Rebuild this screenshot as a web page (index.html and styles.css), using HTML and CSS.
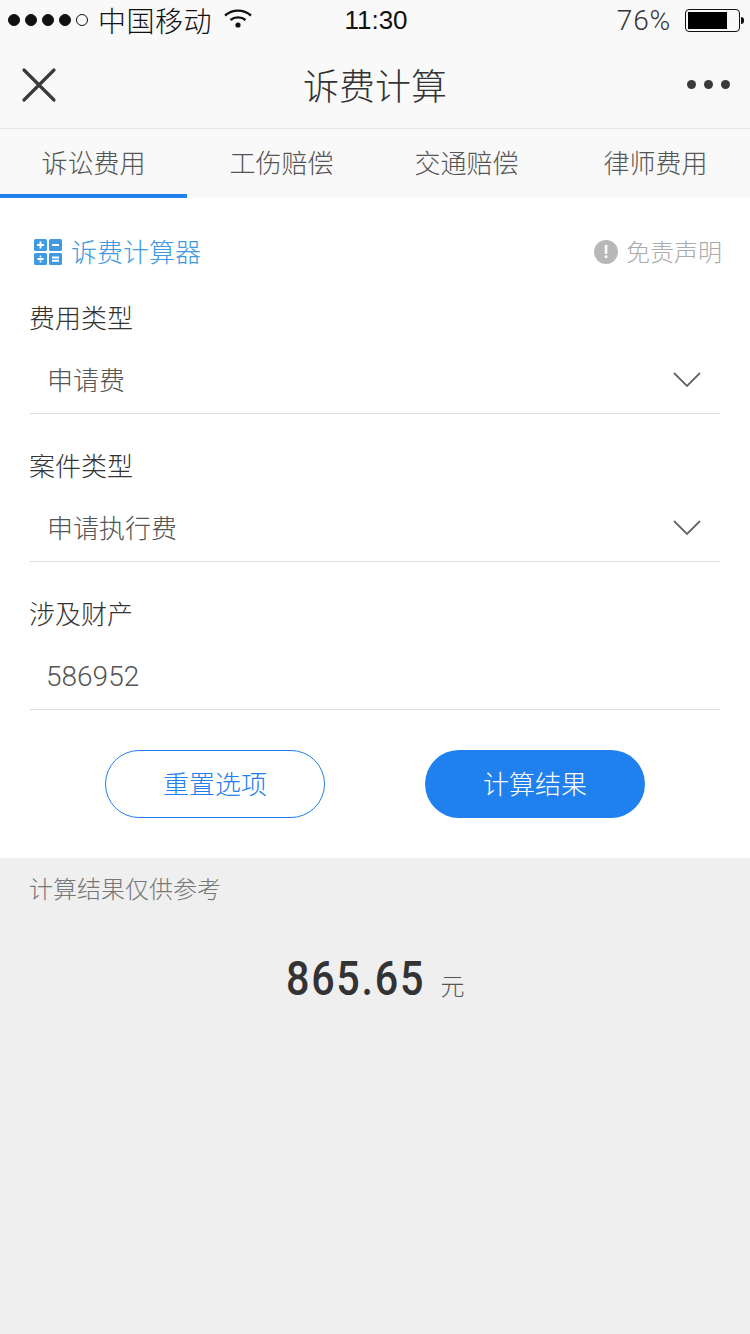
FILE: index.html
```html
<!DOCTYPE html>
<html lang="zh-CN">
<head>
  <meta charset="UTF-8">
  <meta name="viewport" content="width=device-width, initial-scale=1.0">
  <title>诉费计算</title>
  <link rel="stylesheet" href="styles.css">
</head>
<body>
  <!-- 状态栏 -->
  <div class="status-bar">
    <div class="status-left">
      <div class="signal">
        <span class="dot"></span><span class="dot"></span><span class="dot"></span><span class="dot"></span><span class="dot empty"></span>
      </div>
      <span class="carrier">中国移动</span>
      <svg class="wifi" width="30" height="20" viewBox="0 0 30 20">
        <path d="M2 7.5C9.500 1 20.500 1 28 7.500" fill="none" stroke="#111" stroke-width="2.400"/>
        <path d="M7.500 12C11.500 8.500 18.500 8.500 22.500 12" fill="none" stroke="#111" stroke-width="2.400"/>
        <circle cx="15" cy="17" r="2.600" fill="#111"/>
      </svg>
    </div>
    <span class="time">11:30</span>
    <div class="status-right">
      <span class="percent">76%</span>
      <div class="battery"><div class="battery-fill"></div></div>
      <div class="battery-nub"></div>
    </div>
  </div>

  <!-- 导航栏 -->
  <div class="nav-bar">
    <svg class="close-icon" width="36" height="36" viewBox="0 0 36 36">
      <path d="M3 3L33 33M33 3L3 33" fill="none" stroke="#3a3a3a" stroke-width="3.200" stroke-linecap="round"/>
    </svg>
    <h1 class="nav-title">诉费计算</h1>
    <div class="more"><span></span><span></span><span></span></div>
  </div>

  <!-- 标签 -->
  <div class="tabs">
    <div class="tab active">诉讼费用</div>
    <div class="tab">工伤赔偿</div>
    <div class="tab">交通赔偿</div>
    <div class="tab">律师费用</div>
  </div>

  <div class="card">
    <div class="card-head">
      <div class="card-title">
        <svg width="28" height="28" viewBox="0 0 28 28">
          <rect x="0" y="1" width="13" height="12" rx="1.500" fill="#3f9ae2"/>
          <rect x="15" y="1" width="13" height="12" rx="1.500" fill="#3f9ae2"/>
          <rect x="0" y="15" width="13" height="12" rx="1.500" fill="#3f9ae2"/>
          <rect x="15" y="15" width="13" height="12" rx="1.500" fill="#3f9ae2"/>
          <path d="M3 7H10M6.500 3.500V10.500M18 7H25M3.500 21H9.500M18 19.500H25M18 22.800H25" fill="none" stroke="#fff" stroke-width="2"/>
          <circle cx="6.500" cy="18.500" r="1" fill="#fff"/>
          <circle cx="6.500" cy="23.500" r="1" fill="#fff"/>
        </svg>
        <span class="head-text">诉费计算器</span>
      </div>
      <div class="disclaimer">
        <span class="disclaimer-icon">!</span>
        <span class="head-text">免责声明</span>
      </div>
    </div>

    <div class="field">
      <div class="field-label">费用类型</div>
      <div class="field-value">
        <span class="value-text">申请费</span>
        <svg class="chevron" width="28" height="16" viewBox="0 0 28 16"><path d="M1 1L14 14L27 1" fill="none" stroke="#666" stroke-width="1.800"/></svg>
      </div>
    </div>
    <div class="field">
      <div class="field-label">案件类型</div>
      <div class="field-value">
        <span class="value-text">申请执行费</span>
        <svg class="chevron" width="28" height="16" viewBox="0 0 28 16"><path d="M1 1L14 14L27 1" fill="none" stroke="#666" stroke-width="1.800"/></svg>
      </div>
    </div>
    <div class="field">
      <div class="field-label">涉及财产</div>
      <div class="field-value number">586952</div>
    </div>

    <div class="actions">
      <button class="btn btn-outline">重置选项</button>
      <button class="btn btn-solid">计算结果</button>
    </div>
  </div>

  <div class="result">
    <div class="result-note">计算结果仅供参考</div>
    <div class="result-amount">
      <span class="amount">865.65</span>
      <span class="unit">元</span>
    </div>
  </div>
</body>
</html>
```

FILE: styles.css
```css
* {
  margin: 0;
  padding: 0;
  box-sizing: border-box;
}

body {
  width: 750px;
  min-height: 1334px;
  background: #efefef;
  color: #333;
  font-family: 'Liberation Sans', 'Noto Sans CJK SC', sans-serif;
  font-weight: 300;
  overflow: hidden;
}

.status-bar {
  height: 40px;
  background: #f9f9f9;
  color: #111;
  display: flex;
  justify-content: space-between;
  align-items: center;
  padding: 0 6px 0 8px;
}

.status-left {
  width: 290px;
  display: flex;
  align-items: center;
}

.signal {
  display: flex;
  gap: 5px;
}

.dot {
  width: 12px;
  height: 12px;
  border-radius: 50%;
  background: #111;
  border: 1px solid #111;
}

.dot.empty {
  background: none;
}

.carrier {
  font-size: 28px;
  letter-spacing: 0.5px;
  margin-left: 10px;
}

.wifi {
  margin-left: 11px;
  margin-top: -4px;
}

.time {
  font-size: 26px;
  font-weight: 400;
}

.status-right {
  width: 290px;
  display: flex;
  justify-content: flex-end;
  align-items: center;
}

.percent {
  font-family: Roboto, 'Liberation Sans', sans-serif;
  font-size: 28px;
  letter-spacing: 0.8px;
  color: #333;
  margin-right: 14px;
}

.battery {
  width: 55px;
  height: 23px;
  border: 1px solid #111;
  border-radius: 4px;
  padding: 2px;
}

.battery-fill {
  width: 39px;
  height: 100%;
  background: #000;
}

.battery-nub {
  width: 3px;
  height: 7px;
  margin-left: 1px;
  background: #111;
  border-radius: 0 3px 3px 0;
}

.nav-bar {
  height: 89px;
  background: #f9f9f9;
  border-bottom: 1px solid #e4e4e4;
  display: flex;
  justify-content: space-between;
  align-items: center;
  padding: 0 20px;
}

.close-icon {
  margin-left: 1px;
  margin-right: 6px;
  margin-top: 1px;
}

.nav-title {
  font-size: 36px;
  font-weight: 300;
  color: #333;
}

.more {
  display: flex;
  gap: 8px;
}

.more span {
  width: 9px;
  height: 9px;
  border-radius: 50%;
  background: #3a3a3a;
}

.tabs {
  height: 69px;
  background: #f9f9f9;
  display: flex;
}

.tab {
  flex: 1;
  text-align: center;
  font-size: 26px;
  line-height: 70px;
  color: #555;
  border-bottom: 4px solid transparent;
}

.tab.active {
  flex: 0 0 187px;
  border-bottom-color: #1f80ee;
}

.tab:nth-child(2) {
  padding-left: 2px;
}

.tab:nth-child(3) {
  padding-right: 4px;
}

.tab:nth-child(4) {
  padding-right: 2px;
}

.card {
  background: #fff;
  padding: 36px 30px 40px;
  height: 660px;
}

.card-head {
  height: 36px;
  display: flex;
  justify-content: space-between;
  align-items: center;
  margin-bottom: 26px;
}

.head-text {
  margin-bottom: 4px;
}

.card-title {
  display: flex;
  align-items: center;
  gap: 9px;
  margin-left: 4px;
  font-size: 26px;
  color: #3f9ae2;
}

.disclaimer {
  display: flex;
  align-items: center;
  gap: 8px;
  margin-right: -2px;
  font-size: 24px;
  color: #aaa;
}

.disclaimer-icon {
  width: 24px;
  height: 24px;
  border-radius: 50%;
  background: #b8b8b8;
  color: #fff;
  font-size: 18px;
  font-weight: 700;
  line-height: 24px;
  text-align: center;
}

.field {
  margin-bottom: 30px;
}

.field-label {
  height: 46px;
  line-height: 46px;
  font-size: 26px;
  color: #333;
  margin-bottom: 5px;
  margin-left: -1px;
}

.field-value {
  height: 67px;
  border-bottom: 1px solid #ddd;
  display: flex;
  justify-content: space-between;
  align-items: center;
  padding: 0 19px 0 17px;
  font-size: 26px;
  color: #555;
}

.value-text {
  margin-bottom: 4px;
}

.field-value.number {
  font-family: Roboto, 'Liberation Sans', sans-serif;
  font-size: 28px;
  padding-left: 16px;
}

.actions {
  display: flex;
  justify-content: center;
  gap: 100px;
  margin-top: 40px;
}

.btn {
  width: 220px;
  height: 68px;
  padding-bottom: 4px;
  border-radius: 34px;
  font-family: inherit;
  font-weight: 300;
  font-size: 26px;
  cursor: pointer;
}

.btn-outline {
  background: #fff;
  color: #1f80ee;
  border: 1px solid #1f80ee;
}

.btn-solid {
  background: #1f80ee;
  color: #fff;
  border: none;
}

.result-note {
  padding: 15px 29px 0;
  height: 62px;
  line-height: 34px;
  font-size: 24px;
  color: #777;
}

.result-amount {
  display: flex;
  justify-content: center;
  align-items: baseline;
  margin-top: 30px;
}

/* 没有 DIN 字体，用 Roboto 横向压缩 */
.amount {
  display: inline-block;
  font-family: Roboto, sans-serif;
  font-size: 48px;
  font-weight: 500;
  letter-spacing: 2px;
  color: #333;
  transform: scaleX(0.86);
  transform-origin: left;
}

.unit {
  margin-left: -7px;
  font-size: 24px;
  color: #555;
}
```
